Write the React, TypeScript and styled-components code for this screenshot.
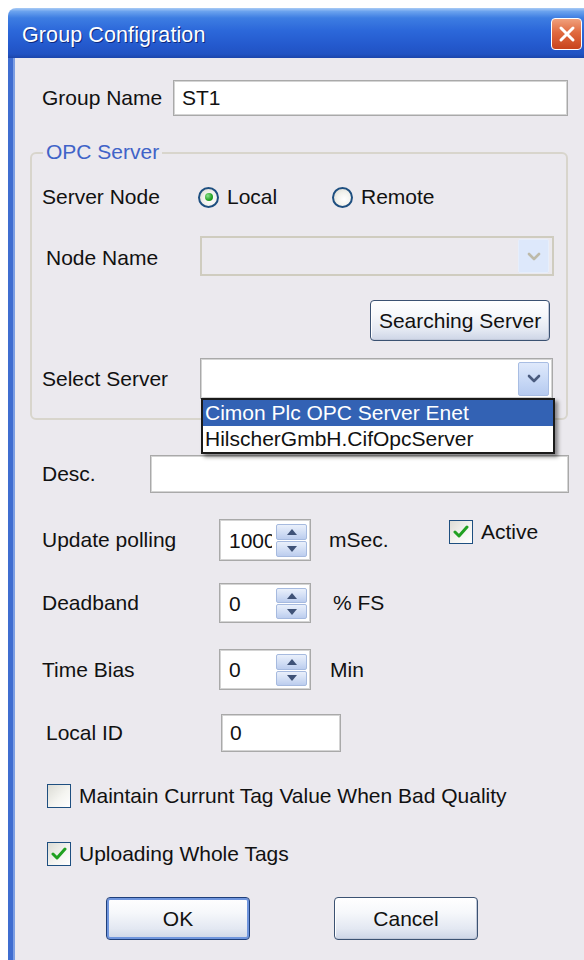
import styled, { createGlobalStyle } from "styled-components";

const GlobalStyle = createGlobalStyle`
    html, body {
        margin: 0;
        padding: 0;
        background: #ffffff;
        overflow: hidden;
    }
    body {
        font-family: "Liberation Sans", Arial, sans-serif;
        font-size: 21px;
        color: #111;
    }
`;

const Page = styled.div`
    padding: 8px 0 0 8px;
    height: 952px;
`;

const Window = styled.div`
    width: 590px;
    height: 952px;
    display: flex;
    flex-direction: column;
    border-radius: 8px 8px 0 0;
    overflow: hidden;
`;

const TitleBar = styled.div`
    height: 50px;
    flex-shrink: 0;
    display: flex;
    align-items: center;
    justify-content: space-between;
    padding-left: 14px;
    background: linear-gradient(
        180deg,
        #a9cbf5 0%,
        #6aa2ee 7%,
        #3d7de2 20%,
        #2c68da 45%,
        #2459cd 75%,
        #2153c3 92%,
        #1b45ab 100%
    );
`;

const Title = styled.span`
    color: #ffffff;
    font-size: 21.5px;
    padding-top: 5px;
    text-shadow: 1px 1px 0 #0c2a80;
    letter-spacing: 0.1px;
`;

const CloseButton = styled.div`
    width: 31px;
    height: 32px;
    margin-right: 16px;
    margin-top: 1px;
    border: 1px solid #ffffff;
    border-radius: 4px;
    background: linear-gradient(180deg, #f0a07c 0%, #e06a3f 45%, #c8431c 100%);
    display: flex;
    align-items: center;
    justify-content: center;
    box-sizing: border-box;
`;

const Body = styled.div`
    flex: 1;
    position: relative;
    background: #ebe9ee;
    padding-top: 22px;
    border-left: 5px solid #3f6dd0;
    box-shadow: inset 3px 0 0 -1px #7c9ee3;
`;

const Row = styled.div<{ $mt: number; $h: number; $pl?: number }>`
    display: flex;
    align-items: center;
    height: ${(p) => p.$h}px;
    margin-top: ${(p) => p.$mt}px;
    padding-left: ${(p) => p.$pl ?? 0}px;
`;

const Label = styled.span<{ $w: number; $indent?: number; $drop?: number }>`
    width: ${(p) => p.$w}px;
    padding-left: ${(p) => p.$indent ?? 0}px;
    padding-top: ${(p) => p.$drop ?? 0}px;
    box-sizing: border-box;
    flex-shrink: 0;
    white-space: nowrap;
`;

const Field = styled.div<{ $w: number; $h: number }>`
    width: ${(p) => p.$w}px;
    height: ${(p) => p.$h}px;
    box-sizing: border-box;
    border: 1px solid #a9a9a9;
    box-shadow: inset 0 0 0 1px #d4d4d4;
    background: #ffffff;
    padding-left: 8px;
    display: flex;
    align-items: center;
    flex-shrink: 0;
`;

const GroupBox = styled.div`
    position: relative;
    margin: 36px 0 0 17px;
    width: 538px;
    box-sizing: border-box;
    border: 2px solid #d8d5cc;
    border-radius: 6px;
    padding: 28px 0 19px 10px;
`;

const Legend = styled.span`
    position: absolute;
    top: -14px;
    left: 11px;
    line-height: 24px;
    padding: 0 3px;
    background: #ebe9ee;
    color: #4063c8;
`;

const RadioOption = styled.div<{ $w: number }>`
    width: ${(p) => p.$w}px;
    display: flex;
    align-items: center;
    gap: 8px;
`;

const RadioCircle = styled.span<{ $on?: boolean }>`
    width: 21px;
    height: 21px;
    box-sizing: border-box;
    border-radius: 50%;
    border: 2px solid #1e4f80;
    background: radial-gradient(circle at 60% 60%, #ffffff 0%, #f1f1ec 50%, #d2d1c9 100%);
    display: flex;
    align-items: center;
    justify-content: center;
    &::after {
        content: "";
        display: ${(p) => (p.$on ? "block" : "none")};
        width: 8px;
        height: 8px;
        border-radius: 50%;
        background: radial-gradient(circle at 35% 35%, #8ee28e 0%, #21a121 60%, #178317 100%);
    }
`;

const Combo = styled.div<{ $w: number; $h: number; $disabled?: boolean }>`
    position: relative;
    width: ${(p) => p.$w}px;
    height: ${(p) => p.$h}px;
    box-sizing: border-box;
    border: ${(p) => (p.$disabled ? "2px solid #cfccbf" : "1px solid #a9a9a9")};
    box-shadow: ${(p) => (p.$disabled ? "none" : "inset 0 0 0 1px #d4d4d4")};
    background: ${(p) => (p.$disabled ? "#ebe9ee" : "#ffffff")};
    display: flex;
    justify-content: flex-end;
    align-items: center;
    padding-right: 3px;
`;

const ComboArrow = styled.div<{ $disabled?: boolean }>`
    width: 31px;
    height: 34px;
    box-sizing: border-box;
    border-radius: 2px;
    border: 1px solid ${(p) => (p.$disabled ? "#e6eefb" : "#a8bde3")};
    background: ${(p) =>
        p.$disabled
            ? "#dde8fb"
            : "linear-gradient(180deg, #dfe9fb 0%, #c6d7f5 60%, #b6caef 100%)"};
    display: flex;
    align-items: center;
    justify-content: center;
`;

const DropList = styled.div`
    position: absolute;
    top: 100%;
    left: 0;
    width: 354px;
    box-sizing: border-box;
    border: 2px solid #1a1a1a;
    background: #ffffff;
    box-shadow: 3px 3px 4px rgba(0, 0, 0, 0.45);
    z-index: 5;
`;

const DropItem = styled.div<{ $selected?: boolean }>`
    height: 26px;
    line-height: 26px;
    padding-left: 2px;
    white-space: nowrap;
    background: ${(p) => (p.$selected ? "#3362b4" : "#ffffff")};
    color: ${(p) => (p.$selected ? "#ffffff" : "#111")};
`;

const Button = styled.div<{ $w: number; $h: number; $default?: boolean; $ml?: number }>`
    width: ${(p) => p.$w}px;
    height: ${(p) => p.$h}px;
    margin-left: ${(p) => p.$ml ?? 0}px;
    box-sizing: border-box;
    border-radius: 4px;
    border: 1px solid ${(p) => (p.$default ? "#1f3f7a" : "#3b5272")};
    background: linear-gradient(180deg, #ffffff 0%, #f6f8fb 35%, #e3e8f2 75%, #cdd5e6 100%);
    box-shadow: ${(p) =>
        p.$default
            ? "inset 0 0 0 2px #6f95dd"
            : "inset -1px -1px 0 #c0c8d9, inset 1px 1px 0 #ffffff"};
    display: flex;
    align-items: center;
    justify-content: center;
    flex-shrink: 0;
`;

const SpinBox = styled.div`
    width: 92px;
    height: 100%;
    box-sizing: border-box;
    border: 1px solid #a9a9a9;
    box-shadow: inset 0 0 0 1px #d4d4d4;
    background: #ffffff;
    display: flex;
    padding: 4px 3px 3px 9px;
    flex-shrink: 0;
`;

// the value is clipped by the spin buttons, as in a narrow numeric box
const SpinValue = styled.span`
    flex: 1;
    min-width: 0;
    overflow: hidden;
    display: flex;
    align-items: center;
    margin-right: 4px;
`;

const SpinText = styled.span`
    white-space: nowrap;
    flex-shrink: 0;
`;

const SpinButtons = styled.div`
    width: 31px;
    display: flex;
    flex-direction: column;
    gap: 1px;
    max-height: 35px;
`;

const SpinButton = styled.div`
    flex: 1;
    border: 1px solid #a6badf;
    border-radius: 2px;
    background: linear-gradient(180deg, #eaf0fb 0%, #cfdcf4 60%, #bccdee 100%);
    display: flex;
    align-items: center;
    justify-content: center;
`;

const Unit = styled.span<{ $ml: number; $w?: number }>`
    margin-left: ${(p) => p.$ml}px;
    width: ${(p) => (p.$w ? `${p.$w}px` : "auto")};
    flex-shrink: 0;
`;

const CheckOption = styled.div<{ $top?: boolean }>`
    display: flex;
    align-items: center;
    gap: 8px;
    align-self: ${(p) => (p.$top ? "flex-start" : "center")};
    margin-top: ${(p) => (p.$top ? "1px" : "0")};
    white-space: nowrap;
`;

const CheckBox = styled.span`
    width: 24px;
    height: 24px;
    box-sizing: border-box;
    border: 1px solid #1e4f80;
    background: linear-gradient(135deg, #dcdcd5 0%, #f4f4f0 55%, #ffffff 100%);
    display: flex;
    align-items: center;
    justify-content: center;
    flex-shrink: 0;
`;

const ButtonRow = styled(Row)`
    gap: 84px;
`;

function Chevron({ color, down }: { color: string; down?: boolean }) {
    return (
        <svg width="14" height="9" viewBox="0 0 14 9">
            <polyline
                points={down ? "2,2 7,7 12,2" : "2,7 7,2 12,7"}
                fill="none"
                stroke={color}
                strokeWidth="2.6"
                strokeLinecap="round"
                strokeLinejoin="round"
            />
        </svg>
    );
}

function SpinArrow({ down }: { down?: boolean }) {
    return (
        <svg width="12" height="8" viewBox="0 0 12 8">
            <polygon
                points={down ? "1,1 11,1 6,7" : "1,7 11,7 6,1"}
                fill="#3f5277"
            />
        </svg>
    );
}

function Tick() {
    return (
        <svg width="16" height="14" viewBox="0 0 16 14">
            <polyline
                points="2,7 6,11 14,2"
                fill="none"
                stroke="#21a121"
                strokeWidth="3"
                strokeLinecap="round"
                strokeLinejoin="round"
            />
        </svg>
    );
}

function Spinner({ value }: { value: string }) {
    return (
        <SpinBox>
            <SpinValue>
                <SpinText>{value}</SpinText>
            </SpinValue>
            <SpinButtons>
                <SpinButton>
                    <SpinArrow />
                </SpinButton>
                <SpinButton>
                    <SpinArrow down />
                </SpinButton>
            </SpinButtons>
        </SpinBox>
    );
}

function App() {
    return (
        <>
            <GlobalStyle />
            <Page>
                <Window>
                    <TitleBar>
                        <Title>Group Configration</Title>
                        <CloseButton>
                            <svg width="18" height="18" viewBox="0 0 18 18">
                                <path
                                    d="M3 3 L15 15 M15 3 L3 15"
                                    stroke="#ffffff"
                                    strokeWidth="3"
                                    strokeLinecap="round"
                                />
                            </svg>
                        </CloseButton>
                    </TitleBar>

                    <Body>
                        <Row $mt={0} $h={36} $pl={29}>
                            <Label $w={131}>Group Name</Label>
                            <Field $w={395} $h={36}>ST1</Field>
                        </Row>

                        <GroupBox>
                            <Legend>OPC Server</Legend>
                            <Row $mt={0} $h={30}>
                                <Label $w={156}>Server Node</Label>
                                <RadioOption $w={134}>
                                    <RadioCircle $on />
                                    Local
                                </RadioOption>
                                <RadioOption $w={140}>
                                    <RadioCircle />
                                    Remote
                                </RadioOption>
                            </Row>
                            <Row $mt={24} $h={40}>
                                <Label $w={158} $indent={4} $drop={4}>Node Name</Label>
                                <Combo $w={354} $h={40} $disabled>
                                    <ComboArrow $disabled>
                                        <Chevron color="#bdbaa9" down />
                                    </ComboArrow>
                                </Combo>
                            </Row>
                            <Row $mt={24} $h={41}>
                                <Button $w={180} $h={41} $ml={328}>
                                    Searching Server
                                </Button>
                            </Row>
                            <Row $mt={17} $h={41}>
                                <Label $w={158}>Select Server</Label>
                                <Combo $w={353} $h={41}>
                                    <ComboArrow>
                                        <Chevron color="#4a5b7e" down />
                                    </ComboArrow>
                                    <DropList>
                                        <DropItem $selected>Cimon Plc OPC Server Enet</DropItem>
                                        <DropItem>HilscherGmbH.CifOpcServer</DropItem>
                                    </DropList>
                                </Combo>
                            </Row>
                        </GroupBox>

                        <Row $mt={35} $h={38} $pl={29}>
                            <Label $w={108}>Desc.</Label>
                            <Field $w={419} $h={38} />
                        </Row>

                        <Row $mt={26} $h={42} $pl={29}>
                            <Label $w={177}>Update polling</Label>
                            <Spinner value="1000" />
                            <Unit $ml={18} $w={120}>mSec.</Unit>
                            <CheckOption $top>
                                <CheckBox>
                                    <Tick />
                                </CheckBox>
                                Active
                            </CheckOption>
                        </Row>

                        <Row $mt={22} $h={40} $pl={29}>
                            <Label $w={177}>Deadband</Label>
                            <Spinner value="0" />
                            <Unit $ml={22}>% FS</Unit>
                        </Row>

                        <Row $mt={26} $h={41} $pl={29}>
                            <Label $w={177}>Time Bias</Label>
                            <Spinner value="0" />
                            <Unit $ml={19}>Min</Unit>
                        </Row>

                        <Row $mt={24} $h={38} $pl={33}>
                            <Label $w={175}>Local ID</Label>
                            <Field $w={120} $h={38}>0</Field>
                        </Row>

                        <Row $mt={32} $h={24} $pl={34}>
                            <CheckOption>
                                <CheckBox />
                                Maintain Currunt Tag Value When Bad Quality
                            </CheckOption>
                        </Row>

                        <Row $mt={34} $h={24} $pl={34}>
                            <CheckOption>
                                <CheckBox>
                                    <Tick />
                                </CheckBox>
                                Uploading Whole Tags
                            </CheckOption>
                        </Row>

                        <ButtonRow $mt={31} $h={43} $pl={93}>
                            <Button $w={144} $h={43} $default>OK</Button>
                            <Button $w={144} $h={43}>Cancel</Button>
                        </ButtonRow>
                    </Body>
                </Window>
            </Page>
        </>
    );
}

export default App;
